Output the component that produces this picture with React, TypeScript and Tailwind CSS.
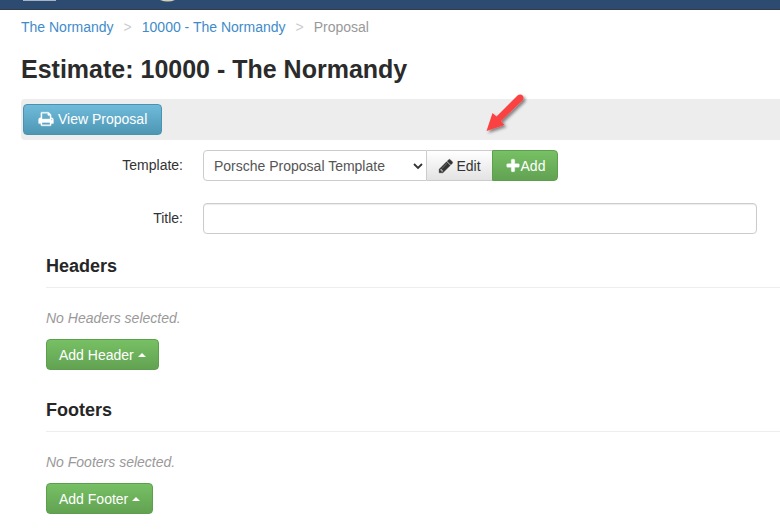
import { useState } from 'react';
import type { ReactNode } from 'react';

const greenButton =
  'bg-gradient-to-b from-[#77c064] to-[#62a252] border border-[#5c9f4c] text-white';

const icons = {
  print:
    'M448 1536h896v-256h-896v256zm0-640h896v-384h-160q-40 0-68-28t-28-68v-160h-640v640zm1152 64q0-26-19-45t-45-19-45 19-19 45 19 45 45 19 45-19 19-45zm128 0v416q0 13-9.500 22.500t-22.500 9.500h-224v160q0 40-28 68t-68 28h-960q-40 0-68-28t-28-68v-160h-224q-13 0-22.500-9.500t-9.500-22.500v-416q0-79 56.500-135.500t135.500-56.500h64v-544q0-40 28-68t68-28h672q40 0 88 20t76 48l152 152q28 28 48 76t20 88v256h64q79 0 135.500 56.500t56.500 135.500z',
  pencil:
    'M491 1536l91-91-235-235-91 91v107h128v128h107zm523-928q0-22-22-22-10 0-17 7l-542 542q-7 7-7 17 0 22 22 22 10 0 17-7l542-542q7-7 7-17zm-54-192l416 416-832 832h-416v-416zm683 96q0 53-37 90l-166 166-416-416 166-165q36-38 90-38 53 0 91 38l235 234q37 39 37 91z',
  plus:
    'M1600 736v192q0 40-28 68t-68 28h-416v416q0 40-28 68t-68 28h-192q-40 0-68-28t-28-68v-416h-416q-40 0-68-28t-28-68v-192q0-40 28-68t68-28h416v-416q0-40 28-68t68-28h192q40 0 68 28t28 68v416h416q40 0 68 28t28 68z',
};

function Icon({ name, className }: { name: keyof typeof icons; className: string }) {
  return (
    <svg
      className={className}
      viewBox="0 0 1792 1792"
      fill="currentColor"
      fillRule="evenodd"
      stroke="currentColor"
      strokeWidth="40"
      aria-hidden="true"
    >
      <path d={icons[name]} />
    </svg>
  );
}

function CalloutArrow() {
  return (
    <svg
      className="pointer-events-none absolute right-6 bottom-[45px] z-10 h-12 w-12"
      viewBox="0 0 48 48"
      aria-hidden="true"
    >
      <defs>
        <filter id="arrow-shadow" x="-20%" y="-20%" width="150%" height="150%">
          <feDropShadow dx="2" dy="2" stdDeviation="1.500" floodColor="#000" floodOpacity="0.45" />
        </filter>
      </defs>
      <path
        d="M0.500 43 L6.500 25 L10.500 28.500 L31.500 7.500 Q34.500 5.200 36.800 7.800 Q38.500 10 36.500 12.500 L15 33 L18.500 37 Z"
        fill="#fb4343"
        filter="url(#arrow-shadow)"
      />
    </svg>
  );
}

function Section({ title, empty, action }: { title: string; empty: string; action: string }) {
  return (
    <section className="pl-[25px]">
      <h2 className="border-b border-[#eeeeee] pb-[11px] text-lg leading-5 font-bold text-[#262626]">
        {title}
      </h2>
      <p className="mt-5 leading-5 text-[#999999] italic">{empty}</p>
      <button
        type="button"
        className={`mt-[11px] flex h-[31px] items-center gap-1 rounded px-3 ${greenButton}`}
      >
        {action}
        <span className="border-x-4 border-b-4 border-x-transparent border-b-white" />
      </button>
    </section>
  );
}

function FormRow({ id, label, children }: { id: string; label: string; children: ReactNode }) {
  return (
    <div className="flex items-center pr-[23px]">
      <label htmlFor={id} className="w-[162px] shrink-0 pb-[2px] text-right text-[#333333]">
        {label}
      </label>
      <div className="ml-5 flex min-w-0 flex-1">{children}</div>
    </div>
  );
}

export default function App() {
  const [title, setTitle] = useState('');

  return (
    <div className="min-h-screen overflow-hidden bg-white font-['Liberation_Sans',Arial,sans-serif] text-sm text-[#333333]">
      {/* Navbar */}
      <header className="h-[10px] border-b border-[#303c4a] bg-[#2d4a70]">
        <svg className="block h-[3px] w-full" aria-hidden="true">
          <rect x="23" width="33" height="1" fill="#a9b4c3" />
          <path d="M160 0 H175 Q168 3 160 0Z" fill="#d5d0b4" />
        </svg>
      </header>

      <main className="pl-[21px]">
        {/* Breadcrumb */}
        <nav aria-label="Breadcrumb" className="pt-[7px]">
          <ol className="flex gap-[10px] leading-5">
            <li>
              <a href="#normandy" className="text-[#428bca]">The Normandy</a>
            </li>
            <li aria-hidden="true" className="text-[#cccccc]">&gt;</li>
            <li>
              <a href="#estimate" className="text-[#428bca]">10000 - The Normandy</a>
            </li>
            <li aria-hidden="true" className="text-[#cccccc]">&gt;</li>
            <li className="text-[#999999]">Proposal</li>
          </ol>
        </nav>

        <h1 className="mt-[17px] text-[25px] leading-[30px] font-bold text-[#2b2b2b]">
          Estimate: 10000 - The Normandy
        </h1>

        {/* Toolbar */}
        <div className="mt-[15px] rounded-l bg-[#ededed] px-[2px] py-[5px]">
          <button
            type="button"
            className="flex h-[31px] items-center gap-1 rounded border border-[#4a93b0] bg-gradient-to-b from-[#70bbda] to-[#4d97b5] px-[14px] pb-[2px] text-white"
          >
            <Icon name="print" className="h-4 w-4" />
            View Proposal
          </button>
        </div>

        {/* Form */}
        <form className="mt-[10px] space-y-[22px]" onSubmit={(e) => e.preventDefault()}>
          <FormRow id="template" label="Template:">
            <div className="relative">
              <select
                id="template"
                className="h-[31px] w-56 appearance-none rounded-l border border-[#cccccc] bg-white pr-6 pl-[10px] text-[#555555]"
              >
                <option>Porsche Proposal Template</option>
              </select>
              <svg
                className="pointer-events-none absolute top-3 right-1 h-2 w-[10px]"
                viewBox="0 0 10 8"
                fill="none"
                stroke="#333"
                strokeWidth="1.800"
                aria-hidden="true"
              >
                <path d="M1 2 L5 6 L9 2" />
              </svg>
            </div>
            <div className="relative flex">
              <CalloutArrow />
              <button
                type="button"
                className="flex h-[31px] w-[65px] items-center justify-center gap-[2px] border-y border-[#cccccc] bg-gradient-to-b from-white to-[#e3e3e3] text-[#333333]"
              >
                <Icon name="pencil" className="h-4 w-4" />
                Edit
              </button>
              <button
                type="button"
                className={`flex h-[31px] w-[66px] items-center justify-center rounded-r ${greenButton}`}
              >
                <Icon name="plus" className="h-4 w-4" />
                Add
              </button>
            </div>
          </FormRow>
          <FormRow id="title" label="Title:">
            <input
              id="title"
              type="text"
              value={title}
              onChange={(e) => setTitle(e.target.value)}
              className="h-[31px] w-full rounded border border-[#cccccc] px-3 shadow-[inset_0_1px_1px_rgba(0,0,0,0.08)]"
            />
          </FormRow>
        </form>

        <div className="mt-[22px] space-y-[30px]">
          <Section title="Headers" empty="No Headers selected." action="Add Header" />
          <Section title="Footers" empty="No Footers selected." action="Add Footer" />
        </div>
      </main>
    </div>
  );
}
